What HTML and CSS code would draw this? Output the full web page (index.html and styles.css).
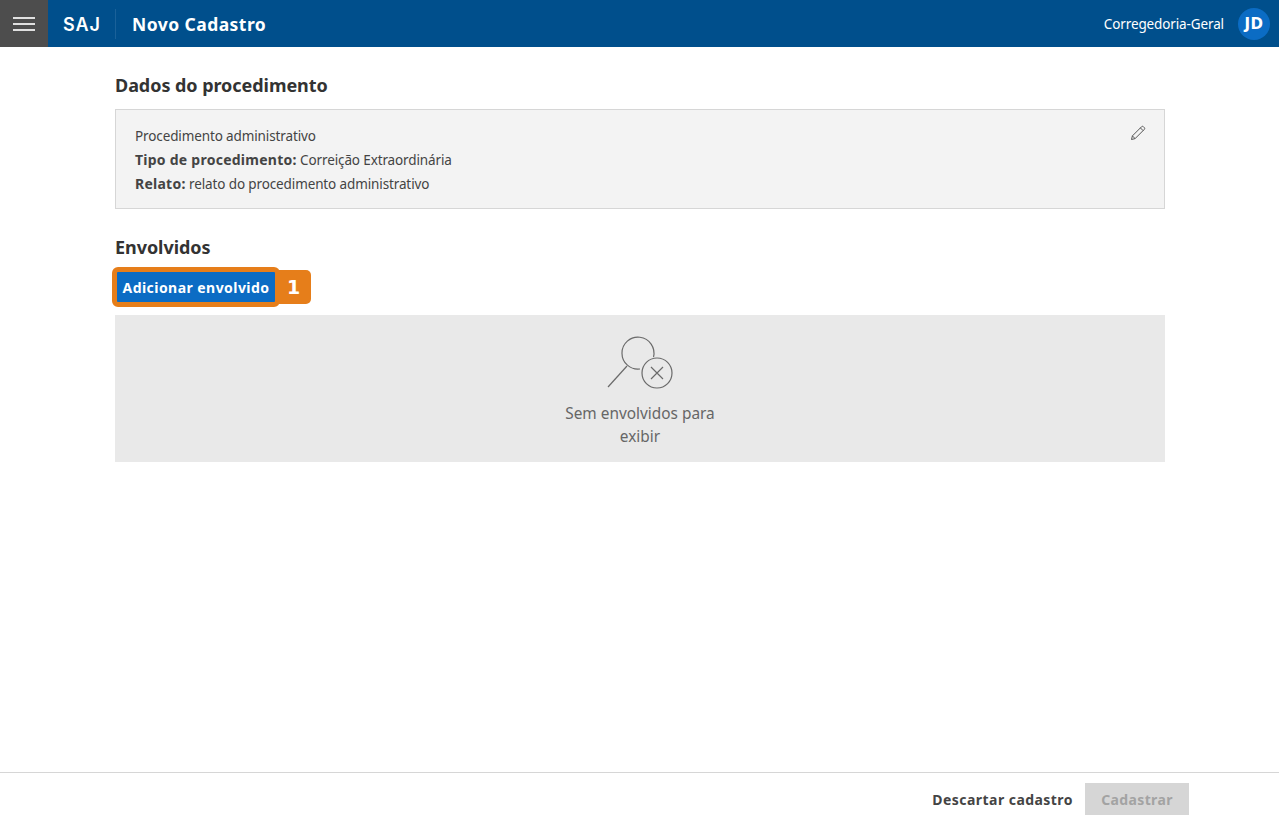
FILE: index.html
```html
<!DOCTYPE html>
<html lang="pt">
<head>
<meta charset="utf-8">
<title>Novo Cadastro</title>
<link rel="stylesheet" href="styles.css">
</head>
<body>
<div class="app">
  <header class="topbar">
    <button class="menu-btn" aria-label="Menu"><span></span><span></span><span></span></button>
    <div class="brand">SAJ</div>
    <div class="page-title">Novo Cadastro</div>
    <div class="org">Corregedoria-Geral</div>
    <div class="avatar">JD</div>
  </header>
  <main class="content">
    <h2 class="section-title">Dados do procedimento</h2>
    <section class="summary">
      <p>Procedimento administrativo</p>
      <p><b>Tipo de procedimento:</b> Correição Extraordinária</p>
      <p><b>Relato:</b> relato do procedimento administrativo</p>
      <svg class="edit" width="16" height="16" viewBox="0 0 16 16" fill="none" stroke="#555" stroke-width="1"><path d="M1.5 14.5l.9-3.6L11.6 1.7a1.3 1.3 0 0 1 1.8 0l.9.9a1.3 1.3 0 0 1 0 1.8L5.1 13.6z"/><path d="M2.4 10.9l2.7 2.7M10.4 2.9l2.7 2.7"/></svg>
    </section>
    <h2 class="section-title second">Envolvidos</h2>
    <div class="action-row">
      <button class="primary">Adicionar envolvido</button>
      <span class="step">1</span>
    </div>
    <section class="empty">
      <svg class="empty-icon" width="68" height="54" viewBox="0 0 68 54" fill="none" stroke="#6a6a6a" stroke-width="1.2"><path d="M47.5 22A16 16 0 1 0 34 34"/><path d="M21 31 2 52"/><circle cx="51" cy="38" r="15"/><path d="M45 32l12 12M57 32 45 44"/></svg>
      <p>Sem envolvidos para<br>exibir</p>
    </section>
  </main>
  <footer class="footer">
    <button class="link">Descartar cadastro</button>
    <button class="disabled">Cadastrar</button>
  </footer>
</div>
</body>
</html>
```
FILE: styles.css
```css
* { box-sizing: border-box; }
html, body { margin: 0; height: 100%; }
body { font-family: "Noto Sans", "DejaVu Sans", sans-serif; font-size: 13.5px; letter-spacing: -.12px; color: #444; background: #fff; }
.app { display: flex; flex-direction: column; height: 823px; }
button { font-family: inherit; border: 0; cursor: pointer; }
b, .section-title, .primary, .link, .disabled, .page-title { font-weight: 700; }

.topbar { height: 47px; flex: none; background: #004f8c; display: flex; align-items: center; color: #fff; }
.menu-btn { width: 48px; height: 47px; background: #4d4d4d; display: flex; flex-direction: column; justify-content: center; align-items: center; gap: 4px; padding: 0; }
.menu-btn span { display: block; width: 22px; height: 2px; background: #e0e0e0; }
.brand { margin-left: 15px; width: 53px; height: 30px; line-height: 31px; font-family: Inter, sans-serif; font-size: 18px; font-weight: 600; letter-spacing: 1px; border-right: 1px solid #1a6199; }
.page-title { margin-left: 16px; font-size: 17.5px; flex: 1; letter-spacing: .45px; padding-top: 1px; }
.org { font-size: 13.5px; margin-right: 14px; }
.avatar { width: 32px; height: 32px; border-radius: 50%; background: #0b6cc4; margin-right: 9px; display: flex; align-items: center; justify-content: center; font-family: "DejaVu Sans", sans-serif; font-weight: 700; font-size: 15px; letter-spacing: .4px; }

.content { flex: 1; padding: 27px 114px 0 115px; }
.section-title { margin: 0; font-size: 18px; line-height: 22px; color: #333; letter-spacing: -.05px; }
.section-title.second { margin-top: 27px; }
.summary { position: relative; margin-top: 13px; height: 100px; background: #f3f3f3; border: 1px solid #d6d6d6; padding: 14px 19px; }
.summary p { margin: 0; line-height: 24px; }
.summary b { font-size: 14px; letter-spacing: .25px; }
.edit { position: absolute; top: 15px; right: 18px; }

.action-row { display: flex; align-items: center; margin-top: 12px; height: 34px; }
.primary { width: 168px; height: 40px; padding: 0; background: #0b6cc4; color: #fff; font-size: 14px; letter-spacing: .45px; border: 5px solid #e67e1a; border-radius: 6px; margin-left: -3px; position: relative; z-index: 1; }
.step { width: 32px; height: 34px; margin-left: -1px; padding-right: 3px; background: #e67e1a; color: #fff; border-radius: 0 5px 5px 0; display: flex; align-items: center; justify-content: center; font-family: "DejaVu Sans", sans-serif; font-weight: 700; font-size: 19px; }

.empty { margin-top: 11px; height: 147px; background: #e9e9e9; display: flex; flex-direction: column; align-items: center; padding-top: 20px; }
.empty-icon { display: block; }
.empty p { margin: 13px 0 0; text-align: center; font-size: 15.4px; letter-spacing: 0; line-height: 23px; color: #666; }

.footer { height: 51px; flex: none; border-top: 1px solid #d6d6d6; display: flex; align-items: center; justify-content: flex-end; padding: 2px 90px 0 0; gap: 12px; }
.link { background: none; color: #444; font-size: 14px; letter-spacing: .45px; padding: 0; }
.disabled { width: 104px; height: 32px; background: #d6d6d6; color: #a3a3a3; font-size: 14px; letter-spacing: .35px; }
```
